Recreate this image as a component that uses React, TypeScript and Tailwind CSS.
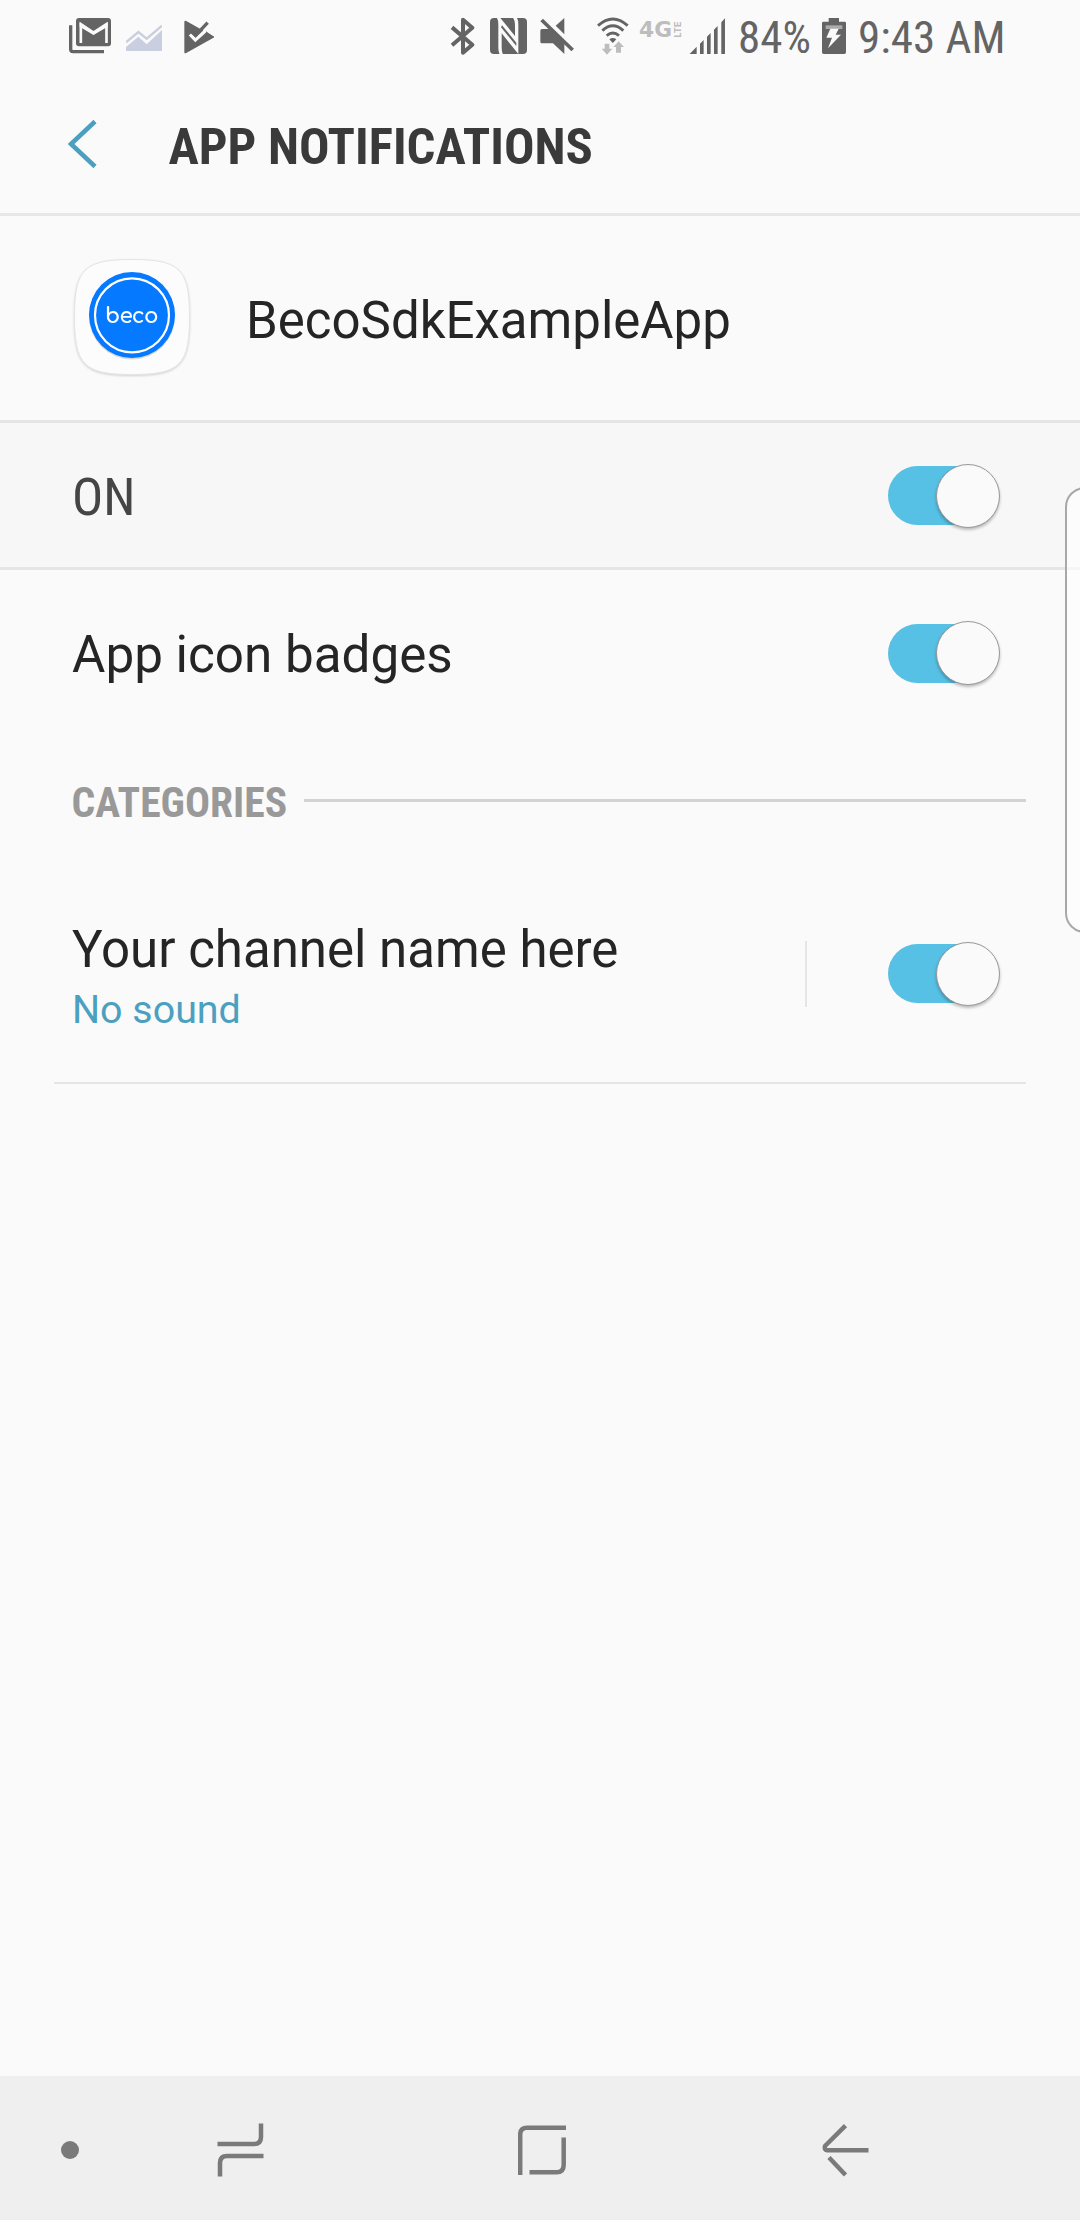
const INK = "#646464";
const PAPER = "#fafafa";

function MailIcon() {
  return (
    <svg viewBox="57 54 126 108" width="42" height="36" className="ml-[69px]">
      <path d="M62 76V148Q62 155 69 155H162" fill="none" stroke={INK} strokeWidth="10" />
      <rect x="78" y="54" width="105" height="85" rx="9" fill={INK} />
      <path d="M92.500 129V74L130.500 99L169.500 74V129" fill="none" stroke={PAPER} strokeWidth="8" />
      <path d="M89 65L130.500 93L173 65V80L130.500 105L89 80Z" fill={PAPER} />
    </svg>
  );
}

function ChartIcon() {
  return (
    <svg viewBox="228 66 108 84" width="36" height="28" className="mt-[1px] ml-[15px]">
      <path d="M228 124L265 93L290 113L336 74" fill="none" stroke="#c9cee0" strokeWidth="7" />
      <path d="M228 138L265 107L290 130L336 87V150H228Z" fill="#c9cee0" />
    </svg>
  );
}

function CheckIcon() {
  return (
    <svg viewBox="402 57 91 102" width="30.300" height="34" className="mt-[1px] ml-[22px]">
      <path d="M406 62L489 108L406 154Z" fill={INK} stroke={INK} strokeWidth="6" strokeLinejoin="round" />
      <path d="M438 60L490 60V100L468 88Z" fill={PAPER} />
      <path d="M420 100L436 117L480 77" fill="none" stroke={PAPER} strokeWidth="10" />
      <path d="M425 92L437 103L473 65" fill="none" stroke={INK} strokeWidth="10" />
      <path d="M468 91L492 108L470 119Z" fill={INK} />
    </svg>
  );
}

function BluetoothIcon() {
  return (
    <svg viewBox="60 50 76 116" width="25.300" height="38.700">
      <path d="M66 81L127 133L99 157V58L127 82L66 135" fill="none" stroke={INK} strokeWidth="12" strokeLinejoin="round" />
    </svg>
  );
}

function NfcIcon() {
  return (
    <svg viewBox="177 54 111 108" width="37" height="36" className="ml-[14px]">
      <rect x="177" y="54" width="111" height="108" rx="12" fill={INK} />
      <path d="M200 54H208L252 108V78Q252 60 246 54H258Q262 60 262 74V162L212 100V140Q212 156 216 162H206Q202 156 202 140V74Q202 60 198 54Z" fill={PAPER} />
      <path d="M210 82L256 138V128L213 76Z" fill={INK} />
    </svg>
  );
}

function MuteIcon() {
  return (
    <svg viewBox="329 54 102 108" width="34" height="36" className="ml-[13px]">
      <path d="M402 54V103L376 77Z" fill={INK} />
      <path d="M330 92Q330 87 335 87H361L402 126V162L368 130H335Q330 130 330 125Z" fill={INK} />
      <path d="M334 60L427 150" stroke={INK} strokeWidth="11" />
    </svg>
  );
}

function WifiIcon() {
  return (
    <svg viewBox="500 46 96 114" width="32" height="38" className="ml-[23px]">
      <g fill="none" stroke={INK} strokeWidth="8.500">
        <path d="M503 72Q547.500 32 592 72" />
        <path d="M516 87Q547.500 58 579 87" />
        <path d="M529 102Q547.500 86 566 102" />
      </g>
      <path d="M537 113Q547.500 105 558 113L547.500 124Z" fill={INK} />
      <path d="M523 126H537V141H546L530 159L514 141H523ZM565 119L581 136H572V153H557V136H549Z" fill="#bdbdbd" />
    </svg>
  );
}

function LteIcon() {
  return (
    <svg viewBox="-1 -6 43 30" width="43" height="30" className="mb-[15px] ml-[10px] overflow-visible" fill="#bdbdbd">
      <text x="-1" y="17" textLength="33" lengthAdjust="spacingAndGlyphs" className="font-['DejaVu_Sans',sans-serif] text-[22px] font-bold">4G</text>
      <text transform="translate(40.500 17.500) rotate(-90)" textLength="16" lengthAdjust="spacingAndGlyphs" className="font-['Inter',sans-serif] text-[9.500px] font-bold">LTE</text>
    </svg>
  );
}

function SignalIcon() {
  return (
    <svg viewBox="774 50 109 109" width="36.300" height="36.300" className="ml-[7px]" fill={INK}>
      <path d="M775 159L797 136V159ZM807 127L818 116V159H807ZM828 106L839 95V159H828ZM849 85L860 74V159H849ZM871 63L882 51V159H871Z" />
    </svg>
  );
}

function BatteryIcon() {
  return (
    <svg viewBox="306 54 72 108" width="24" height="36" className="absolute top-[18px] left-[822px]">
      <path d="M326 54H357V65H374Q378 65 378 69V157Q378 162 373 162H311Q306 162 306 157V69Q306 65 310 65H326Z" fill={INK} />
      <rect x="317" y="76" width="50" height="11" fill="#ababab" />
      <path d="M331 86H356L347 104H363L324 145L336 113H319Z" fill={PAPER} />
    </svg>
  );
}

function StatusBar() {
  return (
    <header className="relative flex h-[72px] items-center text-[45px] leading-[72px] text-[#646464]">
      <MailIcon />
      <ChartIcon />
      <CheckIcon />
      <div className="ml-[236px] flex items-center">
        <BluetoothIcon />
        <NfcIcon />
        <MuteIcon />
        <WifiIcon />
        <LteIcon />
        <SignalIcon />
      </div>
      <span className="absolute top-[2px] left-[738px] font-['Roboto_Condensed',sans-serif]">84%</span>
      <BatteryIcon />
      <span className="absolute top-[2px] left-[858px] font-['Roboto_Condensed',sans-serif]">9:43 AM</span>
    </header>
  );
}

function Toggle() {
  return (
    <span className="flex h-[64px] w-[112px] items-center">
      <span className="h-[59px] w-[88px] rounded-l-full bg-[#56c0e5]" />
      <span className="-ml-[40px] h-[64px] w-[64px] shrink-0 rounded-full border border-[#999] bg-[#fafafa] shadow-[0_2px_3px_rgba(0,0,0,0.25)]" />
    </span>
  );
}

function AppIcon() {
  return (
    <svg viewBox="72 257 120 122" width="120" height="122" className="drop-shadow-[0_1px_1px_rgba(0,0,0,0.16)]">
      <path d="M132 259.500C180 259.500 189.500 269 189.500 317S180 374.500 132 374.500S74.500 365 74.500 317S84 259.500 132 259.500Z" fill="#fcfcfc" stroke="#e4e4e4" />
      <circle cx="132" cy="316.500" r="43" fill="#000" opacity="0.15" />
      <circle cx="132" cy="315" r="43" fill="#0579ff" />
      <circle cx="132" cy="315.300" r="37" fill="none" stroke="#fff" strokeWidth="2.200" />
      <text x="105" y="322.500" fill="#fff" textLength="53.500" className="font-['Comfortaa','Lato',sans-serif] text-[21.500px] font-bold">beco</text>
    </svg>
  );
}

function NavBar() {
  return (
    <nav className="flex h-[144px] items-center bg-[#efefef]">
      <span className="mt-[4px] ml-[61px] size-[18px] rounded-full bg-[#7a7a7a]" />
      <svg viewBox="217 2123 47 54" width="47" height="54" className="mt-[4px] ml-[138px]" fill="none" stroke="#7a7a7a" strokeWidth="4.500">
        <path d="M217.500 2144H254Q261 2144 261 2137V2123.500" />
        <path d="M263.500 2156H227Q220 2156 220 2163V2176.500" />
      </svg>
      <svg viewBox="518 2125 48 50" width="48" height="50" className="mt-[4px] ml-[254px]" fill="none" stroke="#7a7a7a" strokeWidth="4.500">
        <path d="M566 2127.700H527Q520.200 2127.700 520.200 2134.500V2175" />
        <path d="M563.700 2137.500V2165Q563.700 2172.300 556.500 2172.300H529.500" />
      </svg>
      <svg viewBox="820 2122 50 56" width="50" height="56" className="mt-[4px] ml-[254px]" fill="none" stroke="#7a7a7a" strokeWidth="4.500">
        <path d="M845.500 2125.700L825 2146Q824 2150.200 827 2150.200H868.500" strokeLinejoin="round" />
        <path d="M829 2157.500L845.500 2175" />
      </svg>
    </nav>
  );
}

export default function App() {
  return (
    <div className="relative flex h-[2220px] w-[1080px] flex-col overflow-hidden bg-[#fafafa] font-['Roboto',sans-serif] text-[51px] leading-[60px] whitespace-nowrap text-[#252525]">
      <StatusBar />

      <div className="flex h-[144px] items-center border-b-[3px] border-[#e7e7e7]">
        <svg viewBox="66 118 32 52" width="32" height="52" className="mt-[3px] ml-[66px]" fill="none" stroke="#4ba0c0" strokeWidth="4.500">
          <path d="M95 121.500L71 144L95 166.500" />
        </svg>
        <h1 className="mt-[8px] ml-[70.500px] font-['Roboto_Condensed',sans-serif] text-[50.700px] font-bold text-[#3a3a3a]">APP NOTIFICATIONS</h1>
      </div>

      <div className="flex h-[207px] items-center border-b-[3px] border-[#e5e5e5] pl-[72px]">
        <AppIcon />
        <span className="mt-[5px] ml-[54px]">BecoSdkExampleApp</span>
      </div>

      <div className="flex h-[147px] items-center justify-between border-b-[3px] border-[#e5e5e5] bg-[#f7f7f7] pr-[80px] pl-[72px]">
        <span className="mt-[5px] font-['Roboto_Condensed',sans-serif] text-[52px] text-[#454545]">ON</span>
        <div className="mt-[1px]">
          <Toggle />
        </div>
      </div>

      <div className="flex h-[166px] items-center justify-between pr-[80px] pl-[72px]">
        <span className="mt-[3px] text-[51.200px]">App icon badges</span>
        <Toggle />
      </div>

      <div className="flex h-[129px] items-center pr-[54px] pl-[71.500px]">
        <h2 className="mt-[4px] w-[232.500px] font-['Roboto_Condensed',sans-serif] text-[41.600px] font-bold text-[#999]">CATEGORIES</h2>
        <span className="h-[3px] flex-1 bg-[#d3d3d3]" />
      </div>

      <div className="mr-[54px] ml-[54px] flex h-[219px] items-center border-b-2 border-[#e5e5e5] pr-[26px] pl-[18px]">
        <div className="mt-[12px] flex w-[733px] flex-col">
          <span>Your channel name here</span>
          <span className="text-[39.400px] text-[#4ba0c0]">No sound</span>
        </div>
        <span className="mr-[81px] h-[66px] w-[2px] bg-[#e5e5e5]" />
        <Toggle />
      </div>

      <div className="flex-1" />
      <NavBar />
      <div className="absolute top-[487px] -right-[20px] h-[446px] w-[35px] rounded-l-[20px] border-2 border-[#a8a8a8] bg-white/65" />
    </div>
  );
}
